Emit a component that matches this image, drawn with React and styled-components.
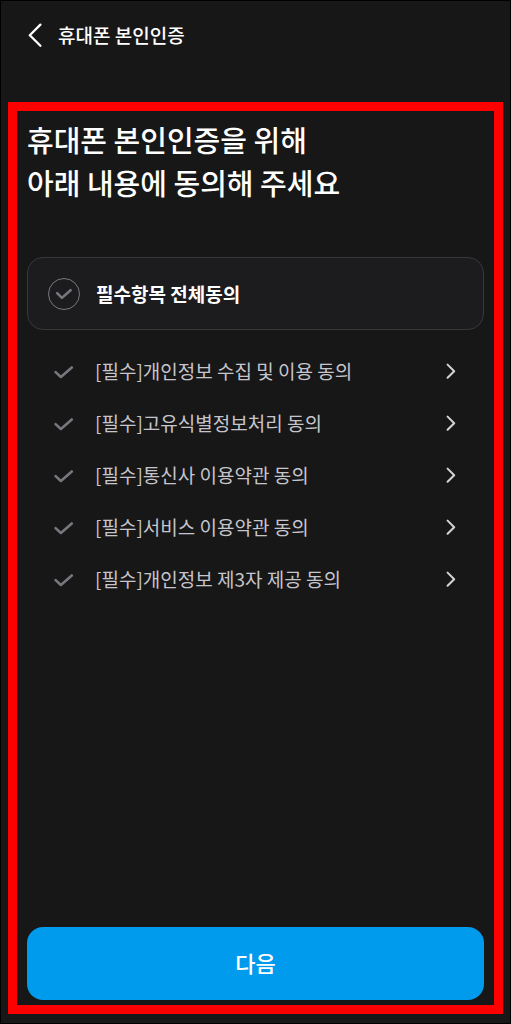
import React, { useState } from 'react';
import styled, { createGlobalStyle } from 'styled-components';

const terms = [
    '[필수]개인정보 수집 및 이용 동의',
    '[필수]고유식별정보처리 동의',
    '[필수]통신사 이용약관 동의',
    '[필수]서비스 이용약관 동의',
    '[필수]개인정보 제3자 제공 동의',
];

function App() {
    const [agreed, setAgreed] = useState(terms.map(() => false));
    const all = agreed.every(Boolean);

    const toggle = (index) => setAgreed(agreed.map((value, i) => (i === index ? !value : value)));
    const toggleAll = () => setAgreed(agreed.map(() => !all));

    return (
        <Screen>
            <GlobalStyle />
            <Header>
                <BackButton type="button" aria-label="뒤로">
                    <svg width="14" height="24" viewBox="0 0 14 24" aria-hidden="true">
                        <path d="M12.4 1.6 L1.8 12.2 L12.4 22.8" />
                    </svg>
                </BackButton>
                <HeaderTitle>휴대폰 본인인증</HeaderTitle>
            </Header>
            <Panel>
                <Title>
                    휴대폰 본인인증을 위해<br />
                    아래 내용에 동의해 주세요
                </Title>
                <AllCard>
                    <CheckSlot>
                        <CheckInput $ring id="all" type="checkbox" checked={all} onChange={toggleAll} />
                        <CheckSvg width="18" height="12" viewBox="0 0 18 12" aria-hidden="true">
                            <path d="M2.2 5.2 L6.9 9.9 L15.6 2.2" />
                        </CheckSvg>
                    </CheckSlot>
                    <AllLabel htmlFor="all">필수항목 전체동의</AllLabel>
                </AllCard>
                <TermList>
                    {terms.map((term, index) => (
                        <TermRow key={term}>
                            <CheckSlot>
                                <CheckInput
                                    id={`term-${index}`}
                                    type="checkbox"
                                    checked={agreed[index]}
                                    onChange={() => toggle(index)}
                                />
                                <CheckSvg width="20" height="16" viewBox="0 0 20 16" aria-hidden="true">
                                    <path d="M1.6 9.1 L6.9 14 L17.8 4.5" />
                                </CheckSvg>
                            </CheckSlot>
                            <TermLabel htmlFor={`term-${index}`}>{term}</TermLabel>
                            <DetailButton type="button" aria-label={`${term} 보기`}>
                                <svg width="10" height="16" viewBox="0 0 10 16" aria-hidden="true">
                                    <path d="M1.6 1.6 L8.2 8.2 L1.6 14.8" />
                                </svg>
                            </DetailButton>
                        </TermRow>
                    ))}
                </TermList>
                <NextButton type="button">다음</NextButton>
            </Panel>
        </Screen>
    )
}

export default App;

const GlobalStyle = createGlobalStyle`
*{
box-sizing:border-box;
}
body{
margin:0;
background-color:#171717;
font-family:"Noto Sans CJK KR",sans-serif;
}
button{
font-family:inherit;
padding:0;
border:none;
background:none;
cursor:pointer;
}
`
const Screen = styled.div`
min-height:100vh;
display:flex;
flex-direction:column;
padding:0 7px 9px;
border:1px solid #000;
background-color:#171717;
color:#fff;
`
const Header = styled.header`
display:flex;
align-items:center;
gap:16px;
height:68px;
margin-bottom:33px;
padding-left:20px;
`
const BackButton = styled.button`
display:flex;
svg{
fill:none;
stroke:#fff;
stroke-width:2.3;
stroke-linecap:round;
stroke-linejoin:round;
}
`
const HeaderTitle = styled.span`
font-size:19px;
font-weight:500;
line-height:28px;
`
const Panel = styled.main`
flex:1;
display:flex;
flex-direction:column;
padding:7px 10px 5px;
border:9px solid #ff0000;
`
const Title = styled.h1`
margin:0 0 53px;
font-size:29px;
font-weight:500;
line-height:43px;
`
const AllCard = styled.div`
display:flex;
align-items:center;
gap:16px;
height:73px;
padding:0 20px;
border:1px solid #38383c;
border-radius:16px;
background-color:#1c1c1e;
`
const CheckSlot = styled.span`
flex:none;
display:grid;
place-items:center;
width:32px;
height:32px;
`
const CheckInput = styled.input`
grid-area:1 / 1;
appearance:none;
width:32px;
height:32px;
margin:0;
border:1px solid ${(props) => (props.$ring ? '#77787d' : 'transparent')};
border-radius:50%;
cursor:pointer;
&:checked + svg{
stroke:#019bee;
}
`
const CheckSvg = styled.svg`
grid-area:1 / 1;
fill:none;
stroke:#77787d;
stroke-width:2.6;
stroke-linecap:round;
stroke-linejoin:round;
pointer-events:none;
`
const AllLabel = styled.label`
font-size:19px;
font-weight:700;
line-height:28px;
`
const TermList = styled.ul`
flex:1;
margin:0;
padding:15px 28px 32px 21px;
list-style:none;
`
const TermRow = styled.li`
display:flex;
align-items:center;
gap:15px;
height:52px;
`
const TermLabel = styled.label`
flex:1;
color:#c6c5cc;
font-size:19px;
line-height:28px;
`
const DetailButton = styled.button`
display:flex;
svg{
fill:none;
stroke:#d3d3d8;
stroke-width:2;
stroke-linecap:round;
stroke-linejoin:round;
}
`
const NextButton = styled.button`
height:73px;
padding-bottom:4px;
border-radius:16px;
background-color:#019bee;
color:#fff;
font-size:22px;
font-weight:500;
line-height:32px;
`
